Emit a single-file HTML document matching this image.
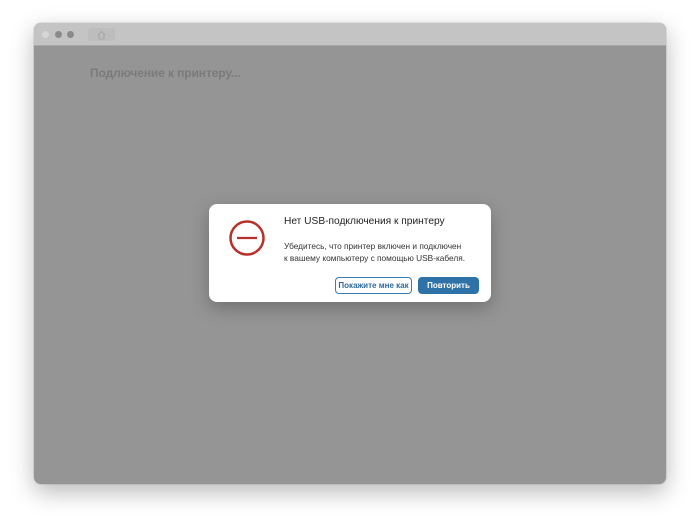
<!DOCTYPE html>
<html><head><meta charset="utf-8"><style>
*{margin:0;padding:0;box-sizing:border-box}
body{width:700px;height:529px;background:#fff;position:relative;overflow:hidden;font-family:"Liberation Sans","DejaVu Sans",sans-serif}
.win{position:absolute;left:34px;top:23px;width:632px;height:461px;border-radius:7px;overflow:hidden;background:#959595;box-shadow:0 8px 24px rgba(0,0,0,.28),0 0 0 1px rgba(0,0,0,.08)}
.tb{position:absolute;left:0;top:0;width:632px;height:23px;background:#c4c4c4;border-bottom:1px solid #a8a8a8}
.dot{position:absolute;top:8px;width:7px;height:7px;border-radius:50%;background:#8a8a8a}
.home{position:absolute;left:54px;top:5px;width:27px;height:13px;border-radius:3px;background:#bdbdbd}
.h{position:absolute;left:56px;top:43px;font-size:12px;font-weight:bold;color:#7b7b7b;letter-spacing:-0.1px}
.dlg{position:absolute;left:209px;top:204px;width:282px;height:98px;background:#fff;border-radius:8px;box-shadow:0 6px 18px rgba(0,0,0,.25)}
.t{position:absolute;left:75px;top:12px;font-size:10.2px;color:#222}
.b{position:absolute;left:75px;top:36px;font-size:8.3px;line-height:12px;color:#333}
.btn{position:absolute;top:73px;height:17px;border-radius:4px;font-size:8px;font-weight:bold;text-align:center;line-height:15px}
</style></head><body>
<div class="win">
<div class="tb"><div class="dot" style="left:8px;background:#d6d6d6"></div><div class="dot" style="left:21px"></div><div class="dot" style="left:33px"></div><div class="home"><svg width="27" height="13" viewBox="0 0 27 13"><path d="M10 7 L13.5 3.5 L17 7 M11 6.5 V11 H16 V6.5" fill="none" stroke="#a0a0a0" stroke-width="0.8"/></svg></div></div>
<div class="h">Подлючение к принтеру...</div>
</div>
<div class="dlg">
<svg style="position:absolute;left:19px;top:15px" width="38" height="38" viewBox="0 0 38 38"><circle cx="19" cy="19" r="16.5" fill="none" stroke="#b8302a" stroke-width="2.5"/><line x1="9" y1="19" x2="29" y2="19" stroke="#b8302a" stroke-width="2.3"/></svg>
<div class="t">Нет USB-подключения к принтеру</div>
<div class="b">Убедитесь, что принтер включен и подключен<br>к вашему компьютеру с помощью USB-кабеля.</div>
<div class="btn" style="left:126px;width:77px;border:1px solid #3a7bb0;color:#2c6a9e;background:#fff">Покажите мне как</div>
<div class="btn" style="left:209px;width:61px;background:#2f72a8;color:#fff;line-height:17px">Повторить</div>
</div>
</body></html>
